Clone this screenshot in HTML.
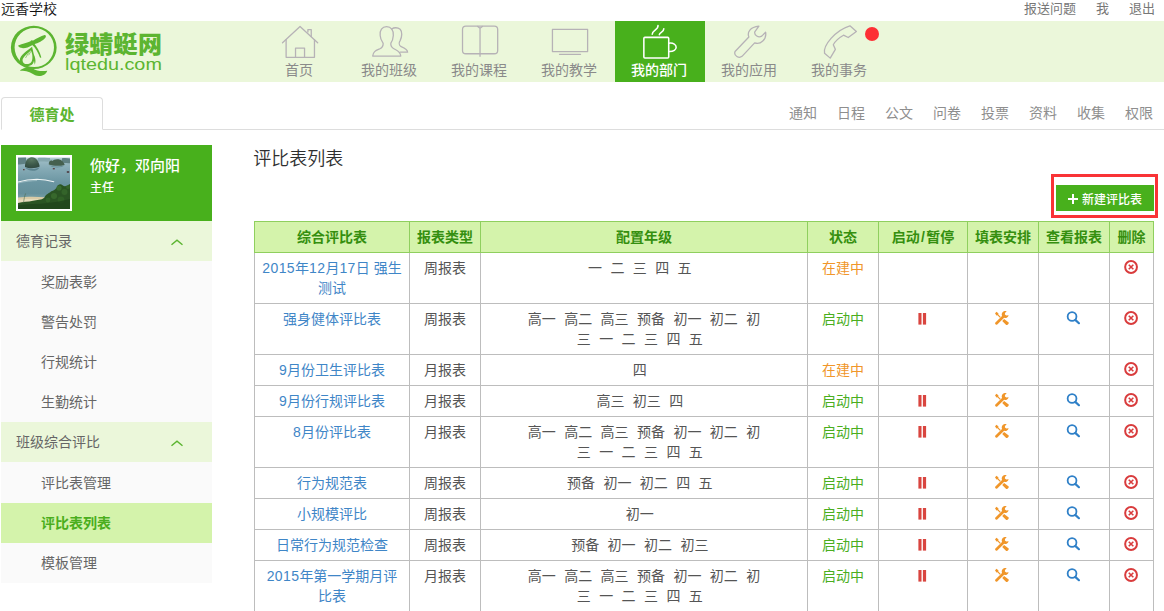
<!DOCTYPE html>
<html lang="zh-CN">
<head>
<meta charset="utf-8">
<title>评比表列表</title>
<style>
*{box-sizing:border-box;margin:0;padding:0}
html,body{width:1164px;height:611px;overflow:hidden;background:#fff}
body{font-family:"Liberation Sans","Noto Sans CJK SC",sans-serif;font-size:14px;color:#555;position:relative}
a{text-decoration:none;color:inherit}
.topbar{position:absolute;left:0;top:0;width:1164px;height:21px;font-size:13px;line-height:18px;color:#333}
.topbar .school{position:absolute;left:1px;top:0;font-size:14px;line-height:19px;color:#111;font-weight:350}
.topbar .links{position:absolute;right:9px;top:0;color:#777}
.topbar .links span{margin-left:20px}
.header{position:absolute;left:0;top:21px;width:1164px;height:61px;background:#ebf7da}
.logo{position:absolute;left:10px;top:4px}
.logo-cn{position:absolute;left:65px;top:10px;font-size:24px;line-height:28px;font-weight:900;color:#5cb531;white-space:nowrap;letter-spacing:.3px}
.logo-en{position:absolute;left:65px;top:34px;font-size:17px;line-height:20px;color:#5cb531;white-space:nowrap;transform:scaleX(1.165);transform-origin:0 0}
.nav{position:absolute;left:255px;top:0;height:61px}
.nav .it{position:absolute;top:0;width:90px;height:61px;text-align:center;color:#8a8a8a;font-size:14px}
.nav .it .lb{position:absolute;left:-2px;right:0;top:39px;line-height:20px}
.nav .it svg{position:absolute;left:25px;top:2px}
.nav .it.on{background:#48b01c;color:#fff;font-weight:500}
.dot{position:absolute;left:865px;top:6px;width:14px;height:14px;border-radius:50%;background:#fd3035}
.tabs{position:absolute;left:1px;top:97px;width:1163px;height:33px;border-bottom:1px solid #ddd}
.tab{position:absolute;left:0;top:0;width:102px;height:33px;border:1px solid #ddd;border-bottom:1px solid #fff;border-radius:4px 4px 0 0;background:#fff;text-align:center;line-height:33px;font-size:15px;font-weight:bold;color:#5cb531}
.tablinks{position:absolute;right:11px;top:0;line-height:33px;color:#8e8e8e;font-size:14px}
.tablinks span{margin-left:20px}
.side{position:absolute;left:1px;top:145px;width:211px}
.prof{height:76px;background:#48b01c;position:relative;color:#fff}
.prof .av{position:absolute;left:15px;top:10px;width:56px;height:56px;border:2px solid #fff;overflow:hidden}
.prof .nm{position:absolute;left:89px;top:10.6px;font-size:15px;line-height:20px;font-weight:500}
.prof .rl{position:absolute;left:89px;top:34.4px;font-size:12px;line-height:18px;font-weight:500}
.sec{height:40px;background:#ebf7da;line-height:40px;padding-left:15px;color:#666;position:relative}
.sec svg{position:absolute;left:168.5px;top:17px}
.grp{padding-top:1px;background:#fafafa}
.sub{height:40px;background:#fafafa;line-height:40px;padding-left:40px;color:#666}
.sub.on{background:#d4f3ab;color:#4aae1d;font-weight:bold}
.title{position:absolute;left:253.3px;top:145.5px;font-size:18px;line-height:26px;color:#2e2e2e;font-weight:350}
.redbox{position:absolute;left:1051px;top:174px;width:107px;height:44px;border:3px solid #f93336}
.btn{position:absolute;left:1056px;top:185px;width:98px;height:26px;background:#48b01c;color:#fff;font-size:12px;font-weight:500;line-height:26px;white-space:nowrap}
.btn span{position:absolute;left:26px;top:1.5px}
.btn i{position:absolute;background:#fff}
table{position:absolute;left:254px;top:221px;border-collapse:collapse;table-layout:fixed;width:899px}
td,th{border:1px solid #bdbdbd;padding:5px 4px;line-height:20px;text-align:center;vertical-align:top;font-size:14px;font-weight:normal;color:#555}
th{background:#d4f3ab;color:#358f0f;font-weight:bold;border-color:#8fcf5e}
td.gr{white-space:nowrap}
.g{margin-right:8.4px}
td.nm{color:#3f86c7;white-space:nowrap}
.d{letter-spacing:.4px}
td.s1{color:#f0962a}
td.s2{color:#4aae1d}
td svg{display:inline-block;vertical-align:top;margin-top:2px;margin-right:1.6px}
</style>
</head>
<body>
<div class="topbar"><span class="school">远香学校</span><div class="links"><span>报送问题</span><span>我</span><span>退出</span></div></div>

<div class="header">
  <svg style="position:absolute;left:10px;top:3px" width="50" height="54" viewBox="0 0 566 611">
    <g fill="#5cb531">
    <path fill-rule="evenodd" d="M10,265 a259,245 0 1,0 518,0 a259,245 0 1,0 -518,0Z M52,266 a223,222 0 1,0 446,0 a223,222 0 1,0 -446,0Z"/>
    <path d="M112,522 C150,500 200,478 250,500 C300,530 360,540 422,528 C405,580 340,600 285,580 C240,555 190,520 122,530Z"/>
    <path d="M92,242 C140,225 200,212 232,196 C236,184 252,182 258,190 C300,165 350,135 392,124 C408,126 410,142 402,152 C390,175 340,205 288,224 C270,232 255,238 245,242 C210,262 160,282 125,270 C105,262 92,252 92,242Z"/>
    <path d="M264,208 C304,252 338,312 355,378 L340,381 C322,326 292,272 250,234Z"/>
    <path d="M265,336 C282,370 300,410 280,462 C275,430 270,400 262,370Z"/>
    </g>
    <path fill="#5cb531" fill-rule="evenodd" d="M250,256 C200,300 110,350 110,412 C110,472 180,492 236,468 C272,450 284,400 268,336 C262,310 256,282 250,256Z M236,296 C196,336 142,374 142,410 C142,452 186,462 222,448 C250,436 258,396 252,348 C248,326 243,310 236,296Z"/>
    <path d="M236,282 L176,384 M248,292 L210,354" fill="none" stroke="#5cb531" stroke-width="7"/>
  </svg>
  <div class="logo-cn">绿蜻蜓网</div>
  <div class="logo-en">lqtedu.com</div>
  <div class="nav">
    <div class="it" style="left:0"><span class="lb">首页</span></div>
    <div class="it" style="left:90px"><span class="lb">我的班级</span></div>
    <div class="it" style="left:180px"><span class="lb">我的课程</span></div>
    <div class="it" style="left:270px"><span class="lb">我的教学</span></div>
    <div class="it on" style="left:360px"><span class="lb">我的部门</span></div>
    <div class="it" style="left:450px"><span class="lb">我的应用</span></div>
    <div class="it" style="left:540px"><span class="lb">我的事务</span></div>
  </div>

  <svg style="position:absolute;left:270px;top:-1px" width="150" height="42" viewBox="0 0 1164 326" fill="none" stroke="#b6b2b6" stroke-width="10" stroke-linejoin="round" stroke-linecap="round">
    <path d="M97,177 L233,50 L370,177"/><path d="M125,152 L125,290 L345,290 L345,152"/><path d="M198,290 L198,218 L268,218 L268,290"/><path d="M294,94 L294,74 L320,74 L320,128"/>
    <path d="M905,52 C870,52 850,80 855,120 C857,150 870,165 878,180 C880,200 870,215 850,225 C820,238 800,245 797,280 L1015,280 C1012,245 990,238 965,225 C945,215 935,200 938,180 C948,165 955,150 957,120 C960,80 940,52 905,52 Z"/>
    <path d="M945,70 C960,58 990,55 1010,72 C1028,90 1025,130 1010,160 C1000,175 1000,195 1015,205 C1040,215 1068,225 1068,250 L1012,250"/>
  </svg>
  <svg style="position:absolute;left:450px;top:-1px" width="150" height="42" viewBox="0 0 1164 326" fill="none" stroke="#b6b2b6" stroke-width="10" stroke-linejoin="round" stroke-linecap="round">
    <rect x="97" y="48" width="273" height="214" rx="26"/><path d="M215,50 L233,64 L251,50 M233,64 L233,282"/>
    <rect x="795" y="73" width="273" height="172"/><path d="M850,266 L1013,266"/>
  </svg>
  <svg style="position:absolute;left:620px;top:-1px" width="150" height="42" viewBox="0 0 1164 326" fill="none" stroke-width="10" stroke-linejoin="round" stroke-linecap="round">
    <g stroke="#fff" stroke-width="12"><rect x="185" y="135" width="193" height="160" rx="8"/><path d="M378,180 C455,170 455,250 378,245"/><path d="M295,42 C300,75 250,80 250,110"/><path d="M340,68 C340,95 305,95 305,115"/></g>
    <path stroke="#b6b2b6" d="M1000,132 C985,95 1010,55 1078,48 L1046,92 C1040,120 1075,140 1100,125 L1130,95 C1140,150 1090,195 1045,178 L947,282 C925,300 880,280 893,245 Z"/>
  </svg>
  <svg style="position:absolute;left:790px;top:-1px" width="150" height="42" viewBox="0 0 1164 326" fill="none" stroke="#b6b2b6" stroke-width="10" stroke-linejoin="round" stroke-linecap="round">
    <path d="M465,45 L515,90 L452,136 L415,118 C385,135 350,165 336,192 L352,228 L312,296 L268,258 C255,200 350,80 465,45 Z"/>
  </svg>
  <div class="dot"></div>
</div>

<div class="tabs">
  <div class="tab">德育处</div>
  <div class="tablinks"><span>通知</span><span>日程</span><span>公文</span><span>问卷</span><span>投票</span><span>资料</span><span>收集</span><span>权限</span></div>
</div>

<div class="side">
  <div class="prof"><div class="av"><svg width="52" height="52" viewBox="0 0 52 52" style="display:block">
<defs><linearGradient id="wg" x1="0" y1="0" x2="0" y2="1"><stop offset="0" stop-color="#a6c2ca"/><stop offset=".22" stop-color="#86abb6"/><stop offset=".5" stop-color="#6a95a1"/><stop offset=".7" stop-color="#65909b"/><stop offset=".82" stop-color="#7fa6ab"/><stop offset="1" stop-color="#92b3b0"/></linearGradient>
<radialGradient id="ig" cx=".45" cy=".2" r=".9"><stop offset="0" stop-color="#5b7a63"/><stop offset=".6" stop-color="#3a5648"/><stop offset="1" stop-color="#2f473f"/></radialGradient></defs>
<rect width="52" height="52" fill="url(#wg)"/>
<rect width="52" height="1.3" fill="#dde7ec"/>
<path d="M0,0.8 L8,0.6 L8,6.5 C5,7.2 2,7.4 0,7.6Z" fill="#5f8184"/>
<path d="M20,1 C24,0.6 28,1.2 32,1 L32,4.6 C28,4.8 24,4.4 20,4.8Z" fill="#86a7ae"/>
<path d="M44,1.2 C47,0.6 50,1 52,1.6 L52,6.2 C49,6.4 46,6 44,5.6Z" fill="#5f8082"/>
<path d="M7,10 C6.6,5 9.5,0.4 13.6,0.2 C18.4,0 21,5 21.7,9.6 C18,11.6 11,11.8 7,10Z" fill="url(#ig)"/>
<path d="M7.2,10.6 C11,12.6 18,12.4 21.6,10.2 C20,14.6 11,15.4 7.2,10.6Z" fill="#4f7883" opacity=".75"/>
<path d="M30.8,7.4 C30.6,4.4 32.6,2.6 34.6,4 C36,1.8 41.6,1.2 44.4,4.2 C45.8,5.6 46.6,7 46.6,8 C41,9.4 35,9 30.8,7.4Z" fill="#45604f"/>
<path d="M31,8 C35,9.8 41,10 46.4,8.6 C44,11 34,11.4 31,8Z" fill="#567f88" opacity=".7"/>
<path d="M0,25 C7,23 14,22.4 19,22.3 C25,22.4 31,23.4 35.8,24.7" fill="none" stroke="#eef4f4" stroke-width="1.1" stroke-linecap="round"/>
<path d="M0,26 C7,24.4 14,23.6 19,23.5" fill="none" stroke="#a9c6cb" stroke-width=".7"/>
<rect x="5" y="12" width="1.6" height="1.3" fill="#5d4547"/><rect x="34.8" y="11" width="2" height="1.4" fill="#5d4547"/><rect x="48.8" y="14.2" width="2.4" height="1.6" fill="#4b383d"/>
<path d="M0,40.6 C8,39.4 18,39.4 26.5,40.2 L27,45.5 L0,46.5Z" fill="#d9cba6"/>
<path d="M0,43 C8,41.6 18,41.8 26,42.6 L26,45 L0,46Z" fill="#e6dcbc"/>
<path d="M0,46 C5,44.4 10,45.2 15,43.8 C19,42.4 23,43.6 26.5,40.5 C28,37 31,36.4 33,34.5 C36,33.4 37.6,33 39,29.6 C40,27.2 42.6,26.4 44.6,28.2 C46.6,30 49,29 52,27 L52,52 L0,52Z" fill="#2a5423"/>
<g opacity=".55"><circle cx="41" cy="31" r="2.6" fill="#47803a"/><circle cx="46.5" cy="35" r="3" fill="#3d7230"/><circle cx="36" cy="39" r="3" fill="#427a34"/><circle cx="30" cy="43" r="2.4" fill="#3a6e2e"/><circle cx="43" cy="43" r="3.4" fill="#356a2a"/><circle cx="50" cy="30" r="2" fill="#3d7230"/></g>
<path d="M0,48.5 C10,46.5 20,47.5 30,46 C38,45 44,44 52,42 L52,52 L0,52Z" fill="#1f431b" opacity=".75"/>
<path d="M5.5,46 C6,42 6.6,39 7.6,36.5" fill="none" stroke="#4d6a4a" stroke-width=".6"/>
</svg></div><div class="nm">你好，邓向阳</div><div class="rl">主任</div></div>
  <div class="sec">德育记录<svg width="14" height="8" viewBox="0 0 14 8" fill="none" stroke="#5cb531" stroke-width="1.4"><path d="M1.5,6.8 L7,2.1 L12.5,6.8"/></svg></div>
  <div class="grp">
  <div class="sub">奖励表彰</div>
  <div class="sub">警告处罚</div>
  <div class="sub">行规统计</div>
  <div class="sub">生勤统计</div>
  </div>
  <div class="sec">班级综合评比<svg width="14" height="8" viewBox="0 0 14 8" fill="none" stroke="#5cb531" stroke-width="1.4"><path d="M1.5,6.8 L7,2.1 L12.5,6.8"/></svg></div>
  <div class="grp">
  <div class="sub">评比表管理</div>
  <div class="sub on">评比表列表</div>
  <div class="sub">模板管理</div>
  </div>
</div>

<div class="title">评比表列表</div>
<div class="redbox"></div>
<div class="btn"><i style="left:12px;top:12.6px;width:9.5px;height:2px"></i><i style="left:15.7px;top:9px;width:2px;height:9.5px"></i><span>新建评比表</span></div>

<table>
<colgroup><col style="width:155px"><col style="width:71px"><col style="width:327px"><col style="width:71px"><col style="width:89px"><col style="width:71px"><col style="width:71px"><col style="width:44px"></colgroup>
<tr><th>综合评比表</th><th>报表类型</th><th>配置年级</th><th>状态</th><th>启动<span style="margin:0 1.3px">/</span>暂停</th><th>填表安排</th><th>查看报表</th><th>删除</th></tr>
<tr><td class="nm"><span class="d">2015</span>年<span class="d">12</span>月<span class="d">17</span>日 强生<br>测试</td><td>周报表</td><td class="gr"><span class="g">一</span><span class="g">二</span><span class="g">三</span><span class="g">四</span><span class="g">五</span><br>&nbsp;</td><td class="s1">在建中</td><td></td><td></td><td></td><td><svg width="14" height="14" viewBox="0 0 14 14" fill="none" stroke="#d93c3d"><circle cx="7.05" cy="7" r="5.9" stroke-width="2"/><path d="M4.75,4.7 L9.35,9.3 M9.35,4.7 L4.75,9.3" stroke-width="1.6"/></svg></td></tr>
<tr><td class="nm">强身健体评比表</td><td>周报表</td><td class="gr"><span class="g">高一</span><span class="g">高二</span><span class="g">高三</span><span class="g">预备</span><span class="g">初一</span><span class="g">初二</span>初<br><span class="g">三</span><span class="g">一</span><span class="g">二</span><span class="g">三</span><span class="g">四</span><span class="g">五</span></td><td class="s2">启动中</td><td><svg width="14" height="14" viewBox="0 0 14 14"><rect x="3.4" y="2" width="3.1" height="11.6" fill="#d9453f"/><rect x="7.9" y="2" width="3.2" height="11.6" fill="#d9453f"/></svg></td><td><svg width="14" height="14" viewBox="0 0 14 14" fill="#f0962a"><path d="M0,2.2 L1.6,0.8 L3.5,2.4 L3.3,3.4 L5.8,5.9 L4.9,6.8 L2.4,4.3 L1.4,4.4Z"/><path d="M9.1,8 L13.7,11.6 Q14,12.6 12.9,13.5 Q12,14.3 11.2,14 L7.2,10.1Z"/><path d="M0.38,11.58 L8.58,3.58 L10.42,5.42 L2.22,13.42 Q1.3,14.1 0.5,13.3 Q-0.2,12.5 0.38,11.58Z"/><path d="M11.7,0.3 A3.5,3.5 0 1,0 13.65,4.2 L11.3,4.5 L9.9,3.4 L10,1.9Z"/></svg></td><td><svg width="14" height="14" viewBox="0 0 14 14" fill="none" stroke="#2f80c8"><circle cx="6.05" cy="5.5" r="4.4" stroke-width="1.8"/><path d="M9.3,8.9 L12.9,12.2" stroke-width="2.2" stroke-linecap="round"/></svg></td><td><svg width="14" height="14" viewBox="0 0 14 14" fill="none" stroke="#d93c3d"><circle cx="7.05" cy="7" r="5.9" stroke-width="2"/><path d="M4.75,4.7 L9.35,9.3 M9.35,4.7 L4.75,9.3" stroke-width="1.6"/></svg></td></tr>
<tr><td class="nm"><span class="d">9</span>月份卫生评比表</td><td>月报表</td><td class="gr"><span class="g">四</span></td><td class="s1">在建中</td><td></td><td></td><td></td><td><svg width="14" height="14" viewBox="0 0 14 14" fill="none" stroke="#d93c3d"><circle cx="7.05" cy="7" r="5.9" stroke-width="2"/><path d="M4.75,4.7 L9.35,9.3 M9.35,4.7 L4.75,9.3" stroke-width="1.6"/></svg></td></tr>
<tr><td class="nm"><span class="d">9</span>月份行规评比表</td><td>月报表</td><td class="gr"><span class="g">高三</span><span class="g">初三</span><span class="g">四</span></td><td class="s2">启动中</td><td><svg width="14" height="14" viewBox="0 0 14 14"><rect x="3.4" y="2" width="3.1" height="11.6" fill="#d9453f"/><rect x="7.9" y="2" width="3.2" height="11.6" fill="#d9453f"/></svg></td><td><svg width="14" height="14" viewBox="0 0 14 14" fill="#f0962a"><path d="M0,2.2 L1.6,0.8 L3.5,2.4 L3.3,3.4 L5.8,5.9 L4.9,6.8 L2.4,4.3 L1.4,4.4Z"/><path d="M9.1,8 L13.7,11.6 Q14,12.6 12.9,13.5 Q12,14.3 11.2,14 L7.2,10.1Z"/><path d="M0.38,11.58 L8.58,3.58 L10.42,5.42 L2.22,13.42 Q1.3,14.1 0.5,13.3 Q-0.2,12.5 0.38,11.58Z"/><path d="M11.7,0.3 A3.5,3.5 0 1,0 13.65,4.2 L11.3,4.5 L9.9,3.4 L10,1.9Z"/></svg></td><td><svg width="14" height="14" viewBox="0 0 14 14" fill="none" stroke="#2f80c8"><circle cx="6.05" cy="5.5" r="4.4" stroke-width="1.8"/><path d="M9.3,8.9 L12.9,12.2" stroke-width="2.2" stroke-linecap="round"/></svg></td><td><svg width="14" height="14" viewBox="0 0 14 14" fill="none" stroke="#d93c3d"><circle cx="7.05" cy="7" r="5.9" stroke-width="2"/><path d="M4.75,4.7 L9.35,9.3 M9.35,4.7 L4.75,9.3" stroke-width="1.6"/></svg></td></tr>
<tr><td class="nm"><span class="d">8</span>月份评比表</td><td>月报表</td><td class="gr"><span class="g">高一</span><span class="g">高二</span><span class="g">高三</span><span class="g">预备</span><span class="g">初一</span><span class="g">初二</span>初<br><span class="g">三</span><span class="g">一</span><span class="g">二</span><span class="g">三</span><span class="g">四</span><span class="g">五</span></td><td class="s2">启动中</td><td><svg width="14" height="14" viewBox="0 0 14 14"><rect x="3.4" y="2" width="3.1" height="11.6" fill="#d9453f"/><rect x="7.9" y="2" width="3.2" height="11.6" fill="#d9453f"/></svg></td><td><svg width="14" height="14" viewBox="0 0 14 14" fill="#f0962a"><path d="M0,2.2 L1.6,0.8 L3.5,2.4 L3.3,3.4 L5.8,5.9 L4.9,6.8 L2.4,4.3 L1.4,4.4Z"/><path d="M9.1,8 L13.7,11.6 Q14,12.6 12.9,13.5 Q12,14.3 11.2,14 L7.2,10.1Z"/><path d="M0.38,11.58 L8.58,3.58 L10.42,5.42 L2.22,13.42 Q1.3,14.1 0.5,13.3 Q-0.2,12.5 0.38,11.58Z"/><path d="M11.7,0.3 A3.5,3.5 0 1,0 13.65,4.2 L11.3,4.5 L9.9,3.4 L10,1.9Z"/></svg></td><td><svg width="14" height="14" viewBox="0 0 14 14" fill="none" stroke="#2f80c8"><circle cx="6.05" cy="5.5" r="4.4" stroke-width="1.8"/><path d="M9.3,8.9 L12.9,12.2" stroke-width="2.2" stroke-linecap="round"/></svg></td><td><svg width="14" height="14" viewBox="0 0 14 14" fill="none" stroke="#d93c3d"><circle cx="7.05" cy="7" r="5.9" stroke-width="2"/><path d="M4.75,4.7 L9.35,9.3 M9.35,4.7 L4.75,9.3" stroke-width="1.6"/></svg></td></tr>
<tr><td class="nm">行为规范表</td><td>周报表</td><td class="gr"><span class="g">预备</span><span class="g">初一</span><span class="g">初二</span><span class="g">四</span><span class="g">五</span></td><td class="s2">启动中</td><td><svg width="14" height="14" viewBox="0 0 14 14"><rect x="3.4" y="2" width="3.1" height="11.6" fill="#d9453f"/><rect x="7.9" y="2" width="3.2" height="11.6" fill="#d9453f"/></svg></td><td><svg width="14" height="14" viewBox="0 0 14 14" fill="#f0962a"><path d="M0,2.2 L1.6,0.8 L3.5,2.4 L3.3,3.4 L5.8,5.9 L4.9,6.8 L2.4,4.3 L1.4,4.4Z"/><path d="M9.1,8 L13.7,11.6 Q14,12.6 12.9,13.5 Q12,14.3 11.2,14 L7.2,10.1Z"/><path d="M0.38,11.58 L8.58,3.58 L10.42,5.42 L2.22,13.42 Q1.3,14.1 0.5,13.3 Q-0.2,12.5 0.38,11.58Z"/><path d="M11.7,0.3 A3.5,3.5 0 1,0 13.65,4.2 L11.3,4.5 L9.9,3.4 L10,1.9Z"/></svg></td><td><svg width="14" height="14" viewBox="0 0 14 14" fill="none" stroke="#2f80c8"><circle cx="6.05" cy="5.5" r="4.4" stroke-width="1.8"/><path d="M9.3,8.9 L12.9,12.2" stroke-width="2.2" stroke-linecap="round"/></svg></td><td><svg width="14" height="14" viewBox="0 0 14 14" fill="none" stroke="#d93c3d"><circle cx="7.05" cy="7" r="5.9" stroke-width="2"/><path d="M4.75,4.7 L9.35,9.3 M9.35,4.7 L4.75,9.3" stroke-width="1.6"/></svg></td></tr>
<tr><td class="nm">小规模评比</td><td>周报表</td><td class="gr"><span class="g">初一</span></td><td class="s2">启动中</td><td><svg width="14" height="14" viewBox="0 0 14 14"><rect x="3.4" y="2" width="3.1" height="11.6" fill="#d9453f"/><rect x="7.9" y="2" width="3.2" height="11.6" fill="#d9453f"/></svg></td><td><svg width="14" height="14" viewBox="0 0 14 14" fill="#f0962a"><path d="M0,2.2 L1.6,0.8 L3.5,2.4 L3.3,3.4 L5.8,5.9 L4.9,6.8 L2.4,4.3 L1.4,4.4Z"/><path d="M9.1,8 L13.7,11.6 Q14,12.6 12.9,13.5 Q12,14.3 11.2,14 L7.2,10.1Z"/><path d="M0.38,11.58 L8.58,3.58 L10.42,5.42 L2.22,13.42 Q1.3,14.1 0.5,13.3 Q-0.2,12.5 0.38,11.58Z"/><path d="M11.7,0.3 A3.5,3.5 0 1,0 13.65,4.2 L11.3,4.5 L9.9,3.4 L10,1.9Z"/></svg></td><td><svg width="14" height="14" viewBox="0 0 14 14" fill="none" stroke="#2f80c8"><circle cx="6.05" cy="5.5" r="4.4" stroke-width="1.8"/><path d="M9.3,8.9 L12.9,12.2" stroke-width="2.2" stroke-linecap="round"/></svg></td><td><svg width="14" height="14" viewBox="0 0 14 14" fill="none" stroke="#d93c3d"><circle cx="7.05" cy="7" r="5.9" stroke-width="2"/><path d="M4.75,4.7 L9.35,9.3 M9.35,4.7 L4.75,9.3" stroke-width="1.6"/></svg></td></tr>
<tr><td class="nm">日常行为规范检查</td><td>周报表</td><td class="gr"><span class="g">预备</span><span class="g">初一</span><span class="g">初二</span><span class="g">初三</span></td><td class="s2">启动中</td><td><svg width="14" height="14" viewBox="0 0 14 14"><rect x="3.4" y="2" width="3.1" height="11.6" fill="#d9453f"/><rect x="7.9" y="2" width="3.2" height="11.6" fill="#d9453f"/></svg></td><td><svg width="14" height="14" viewBox="0 0 14 14" fill="#f0962a"><path d="M0,2.2 L1.6,0.8 L3.5,2.4 L3.3,3.4 L5.8,5.9 L4.9,6.8 L2.4,4.3 L1.4,4.4Z"/><path d="M9.1,8 L13.7,11.6 Q14,12.6 12.9,13.5 Q12,14.3 11.2,14 L7.2,10.1Z"/><path d="M0.38,11.58 L8.58,3.58 L10.42,5.42 L2.22,13.42 Q1.3,14.1 0.5,13.3 Q-0.2,12.5 0.38,11.58Z"/><path d="M11.7,0.3 A3.5,3.5 0 1,0 13.65,4.2 L11.3,4.5 L9.9,3.4 L10,1.9Z"/></svg></td><td><svg width="14" height="14" viewBox="0 0 14 14" fill="none" stroke="#2f80c8"><circle cx="6.05" cy="5.5" r="4.4" stroke-width="1.8"/><path d="M9.3,8.9 L12.9,12.2" stroke-width="2.2" stroke-linecap="round"/></svg></td><td><svg width="14" height="14" viewBox="0 0 14 14" fill="none" stroke="#d93c3d"><circle cx="7.05" cy="7" r="5.9" stroke-width="2"/><path d="M4.75,4.7 L9.35,9.3 M9.35,4.7 L4.75,9.3" stroke-width="1.6"/></svg></td></tr>
<tr><td class="nm"><span class="d">2015</span>年第一学期月评<br>比表</td><td>月报表</td><td class="gr"><span class="g">高一</span><span class="g">高二</span><span class="g">高三</span><span class="g">预备</span><span class="g">初一</span><span class="g">初二</span>初<br><span class="g">三</span><span class="g">一</span><span class="g">二</span><span class="g">三</span><span class="g">四</span><span class="g">五</span></td><td class="s2">启动中</td><td><svg width="14" height="14" viewBox="0 0 14 14"><rect x="3.4" y="2" width="3.1" height="11.6" fill="#d9453f"/><rect x="7.9" y="2" width="3.2" height="11.6" fill="#d9453f"/></svg></td><td><svg width="14" height="14" viewBox="0 0 14 14" fill="#f0962a"><path d="M0,2.2 L1.6,0.8 L3.5,2.4 L3.3,3.4 L5.8,5.9 L4.9,6.8 L2.4,4.3 L1.4,4.4Z"/><path d="M9.1,8 L13.7,11.6 Q14,12.6 12.9,13.5 Q12,14.3 11.2,14 L7.2,10.1Z"/><path d="M0.38,11.58 L8.58,3.58 L10.42,5.42 L2.22,13.42 Q1.3,14.1 0.5,13.3 Q-0.2,12.5 0.38,11.58Z"/><path d="M11.7,0.3 A3.5,3.5 0 1,0 13.65,4.2 L11.3,4.5 L9.9,3.4 L10,1.9Z"/></svg></td><td><svg width="14" height="14" viewBox="0 0 14 14" fill="none" stroke="#2f80c8"><circle cx="6.05" cy="5.5" r="4.4" stroke-width="1.8"/><path d="M9.3,8.9 L12.9,12.2" stroke-width="2.2" stroke-linecap="round"/></svg></td><td><svg width="14" height="14" viewBox="0 0 14 14" fill="none" stroke="#d93c3d"><circle cx="7.05" cy="7" r="5.9" stroke-width="2"/><path d="M4.75,4.7 L9.35,9.3 M9.35,4.7 L4.75,9.3" stroke-width="1.6"/></svg></td></tr>
</table>
</body>
</html>
